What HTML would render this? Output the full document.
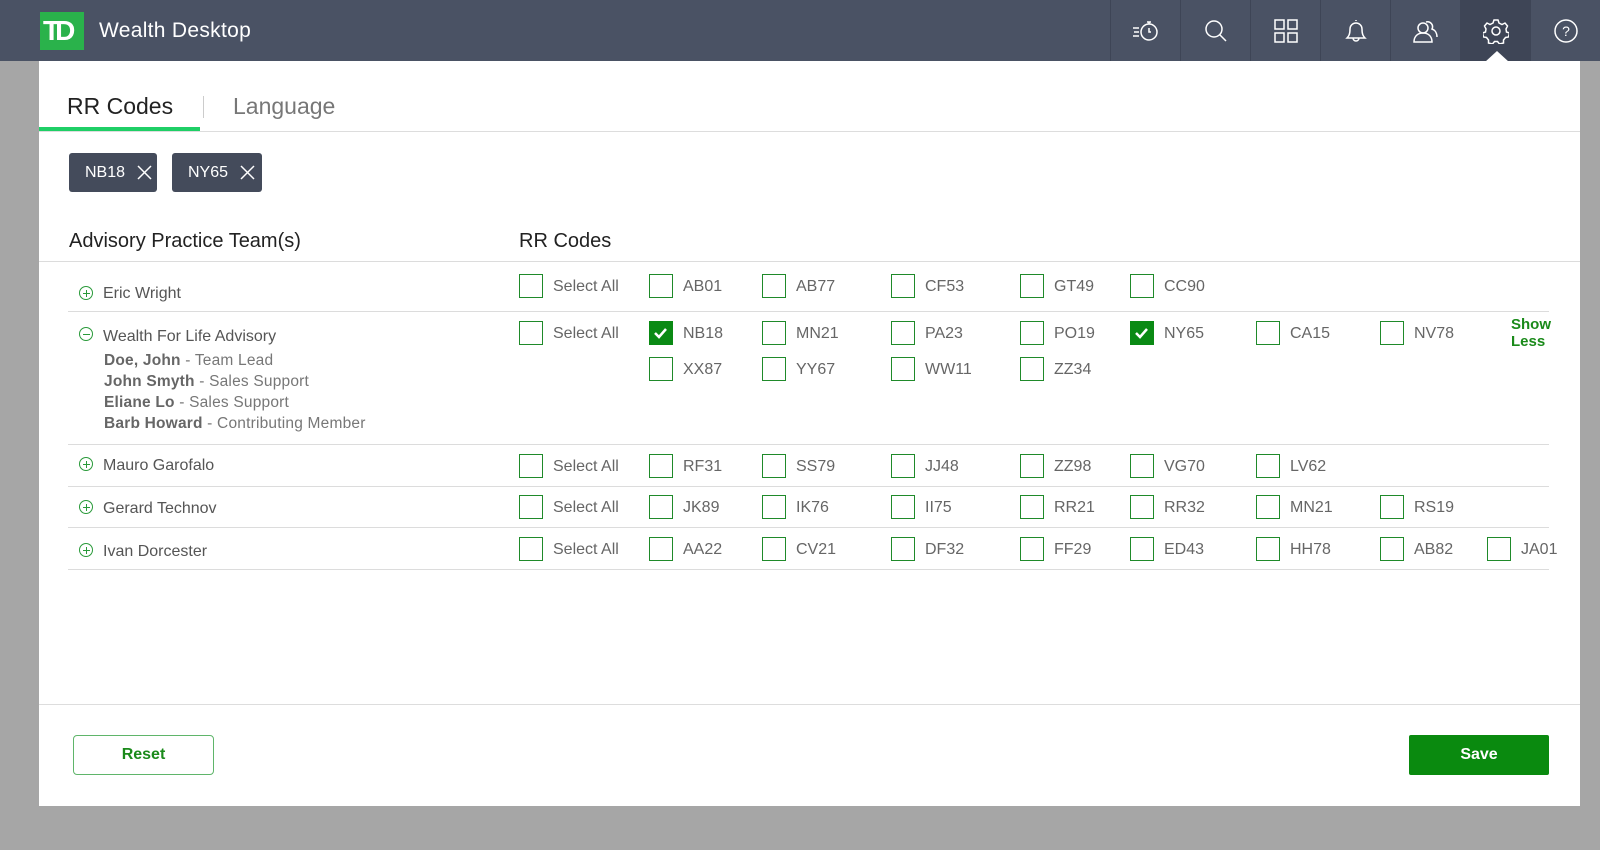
<!DOCTYPE html>
<html><head><meta charset="utf-8"><style>
*{margin:0;padding:0;box-sizing:border-box}
body{width:1600px;height:850px;background:#a6a6a6;font-family:"Liberation Sans",sans-serif;position:relative;overflow:hidden}
.a{position:absolute}
.hdr{left:0;top:0;width:1600px;height:61px;background:#4a5264}
.cell{top:0;height:61px;width:70px;border-left:1px solid #3e4556;display:flex;align-items:center;justify-content:center}
.panel{left:39px;top:61px;width:1541px;height:745px;background:#fff}
.chip{height:39px;background:#444b5b;border-radius:3px;color:#fff;font-size:16px;display:flex;align-items:center;padding-left:16px}
.hl{height:1px;background:#dcdcdc}
.cb{width:24px;height:24px;border:1.5px solid #1f8a2a;background:#fff}
.cb.on{background:#0a8a14;border-color:#0a8a14}
.lbl{font-size:16px;color:#666}
.nm{font-size:16px;color:#555}
.ic{width:14px;height:14px;border:1px solid #2a9a3a;border-radius:50%}
.mem{font-size:15.5px;color:#777;letter-spacing:0.2px}
.mem b{color:#666;font-weight:bold}
</style></head><body>
<div class="a hdr"></div>
<div class="a" style="left:40px;top:12px;width:44px;height:38px;background:#2ab24b;color:#fff;font-weight:bold;font-size:28px;letter-spacing:-5px;line-height:38px;padding-left:3px">TD</div>
<div class="a" style="left:99px;top:19px;color:#fff;font-size:21px;letter-spacing:0.3px">Wealth Desktop</div>

<div class="a cell" style="left:1110px"><svg width="30" height="26" viewBox="0 0 30 26" fill="none" stroke="#fff" stroke-width="1.5"><circle cx="18" cy="14" r="8"/><path d="M16 4h4M18 4v2M18 10v4h2M2 10h6M3 14h5M2 18h6"/></svg></div>
<div class="a cell" style="left:1180px"><svg width="24" height="24" fill="none" stroke="#fff" stroke-width="1.5"><circle cx="10" cy="10" r="8"/><path d="M16 16l6 6"/></svg></div>
<div class="a cell" style="left:1250px"><svg width="24" height="24" fill="none" stroke="#fff" stroke-width="1.5"><rect x="1" y="1" width="9" height="9"/><rect x="14" y="1" width="9" height="9"/><rect x="1" y="14" width="9" height="9"/><rect x="14" y="14" width="9" height="9"/></svg></div>
<div class="a cell" style="left:1320px"><svg width="24" height="26" fill="none" stroke="#fff" stroke-width="1.5"><path d="M3 20c2-2 3-4 3-9a6 6 0 0 1 12 0c0 5 1 7 3 9zM9 20a3 3 0 0 0 6 0M12 3V2"/></svg></div>
<div class="a cell" style="left:1390px"><svg width="26" height="26" fill="none" stroke="#fff" stroke-width="1.5"><circle cx="10" cy="10" r="5"/><path d="M1 24c0-6 4-9 9-9s9 3 9 9zM13 4a5 5 0 0 1 6 7c3 1 5 4 5 8"/></svg></div>
<div class="a cell" style="left:1460px;background:#3e4556"><svg width="26" height="26" viewBox="0 0 26 26" fill="none" stroke="#fff" stroke-width="1.5"><circle cx="13" cy="13" r="4"/><path d="M11 2h4l1 3 3 1.5 3-1.5 2.5 3-1.5 3 .5 3 3 1-1 4-3 .5-2 2.5v3l-4 1-2-2.5h-3l-2 2.5-4-1v-3l-2-2.5-3-.5-1-4 3-1 .5-3-1.5-3L4 5l3 1.5L10 5z"/></svg></div>
<div class="a cell" style="left:1530px"><svg width="26" height="26" fill="none" stroke="#fff" stroke-width="1.5"><circle cx="13" cy="13" r="11"/><text x="13" y="18" text-anchor="middle" fill="#fff" stroke="none" font-size="14" font-family="Liberation Sans">?</text></svg></div>

<div class="a panel"></div>
<div class="a" style="left:1485px;top:51px;width:0;height:0;border-left:12px solid transparent;border-right:12px solid transparent;border-bottom:11px solid #fff"></div>

<div class="a" style="left:67px;top:93px;font-size:23px;color:#222">RR Codes</div>
<div class="a" style="left:203px;top:96px;width:1px;height:22px;background:#ccc"></div>
<div class="a" style="left:233px;top:93px;font-size:23px;color:#777">Language</div>
<div class="a" style="left:39px;top:131px;width:1541px;height:1px;background:#ddd"></div>
<div class="a" style="left:39px;top:127px;width:161px;height:4px;background:#1fcf66"></div>

<div class="a chip" style="left:69px;top:153px;width:88px">NB18 <svg style="margin-left:12px" width="15" height="15" stroke="#fff" stroke-width="1.5"><path d="M1 1l13 13M14 1L1 14"/></svg></div>
<div class="a chip" style="left:172px;top:153px;width:90px">NY65 <svg style="margin-left:12px" width="15" height="15" stroke="#fff" stroke-width="1.5"><path d="M1 1l13 13M14 1L1 14"/></svg></div>

<div class="a" style="left:69px;top:230px;font-size:20px;color:#222">Advisory Practice Team(s)</div>
<div class="a" style="left:519px;top:230px;font-size:20px;color:#222">RR Codes</div>
<div class="a hl" style="left:39px;top:261px;width:1541px"></div>
<div class="a hl" style="left:68px;top:311px;width:1481px"></div>
<div class="a hl" style="left:68px;top:444px;width:1481px"></div>
<div class="a hl" style="left:68px;top:486px;width:1481px"></div>
<div class="a hl" style="left:68px;top:527px;width:1481px"></div>
<div class="a hl" style="left:68px;top:569px;width:1481px"></div>

<div class="a ic" style="left:79px;top:286px"><svg class="a" style="left:2px;top:2px" width="9" height="9" stroke="#2a9a3a"><path d="M4.5 1v7M1 4.5h7"/></svg></div>
<div class="a nm" style="left:103px;top:285px">Eric Wright</div>
<div class="a ic" style="left:79px;top:327px"><svg class="a" style="left:2px;top:2px" width="9" height="9" stroke="#2a9a3a"><path d="M1 4.5h7"/></svg></div>
<div class="a nm" style="left:103px;top:328px">Wealth For Life Advisory</div>
<div class="a mem" style="left:104px;top:352px"><b>Doe, John</b> - Team Lead</div>
<div class="a mem" style="left:104px;top:373px"><b>John Smyth</b> - Sales Support</div>
<div class="a mem" style="left:104px;top:394px"><b>Eliane Lo</b> - Sales Support</div>
<div class="a mem" style="left:104px;top:415px"><b>Barb Howard</b> - Contributing Member</div>
<div class="a ic" style="left:79px;top:457px"><svg class="a" style="left:2px;top:2px" width="9" height="9" stroke="#2a9a3a"><path d="M4.5 1v7M1 4.5h7"/></svg></div>
<div class="a nm" style="left:103px;top:457px">Mauro Garofalo</div>
<div class="a ic" style="left:79px;top:500px"><svg class="a" style="left:2px;top:2px" width="9" height="9" stroke="#2a9a3a"><path d="M4.5 1v7M1 4.5h7"/></svg></div>
<div class="a nm" style="left:103px;top:500px">Gerard Technov</div>
<div class="a ic" style="left:79px;top:543px"><svg class="a" style="left:2px;top:2px" width="9" height="9" stroke="#2a9a3a"><path d="M4.5 1v7M1 4.5h7"/></svg></div>
<div class="a nm" style="left:103px;top:543px">Ivan Dorcester</div>

<div class="a" style="left:1511px;top:316px;font-size:15px;color:#1a8a1a;line-height:17px;font-weight:bold">Show<br>Less</div>

<div class="a" style="left:73px;top:735px;width:141px;height:40px;border:1.5px solid #5fb56a;border-radius:4px;color:#1a8a1a;font-size:16px;font-weight:bold;display:flex;align-items:center;justify-content:center">Reset</div>
<div class="a" style="left:1409px;top:735px;width:140px;height:40px;background:#0a8a0f;border-radius:2px;color:#fff;font-size:16px;font-weight:bold;display:flex;align-items:center;justify-content:center">Save</div>
<div class="a" style="left:39px;top:704px;width:1541px;height:1px;background:#ddd"></div>

<div id="cbs"></div>
<script>
var cols=[519,649,762,891,1020,1130,1256,1380,1487];
var rows=[
[286,["Select All","AB01","AB77","CF53","GT49","CC90"]],
[333,["Select All","*NB18","MN21","PA23","PO19","*NY65","CA15","NV78"]],
[369,[null,"XX87","YY67","WW11","ZZ34"]],
[466,["Select All","RF31","SS79","JJ48","ZZ98","VG70","LV62"]],
[507,["Select All","JK89","IK76","II75","RR21","RR32","MN21","RS19"]],
[549,["Select All","AA22","CV21","DF32","FF29","ED43","HH78","AB82","JA01"]]];
var h="";
rows.forEach(function(r){r[1].forEach(function(t,i){if(!t)return;var on=t[0]=="*";if(on)t=t.slice(1);
h+='<div class="a cb'+(on?' on':'')+'" style="left:'+cols[i]+'px;top:'+(r[0]-12)+'px">'+(on?'<svg width="21" height="21"><path d="M5 11l4 4 7-8" fill="none" stroke="#fff" stroke-width="2.5"/></svg>':'')+'</div>';
h+='<div class="a lbl" style="left:'+(cols[i]+34)+'px;top:'+(r[0]-8)+'px">'+t+'</div>';});});
document.getElementById("cbs").innerHTML=h;
</script>
</body></html>
